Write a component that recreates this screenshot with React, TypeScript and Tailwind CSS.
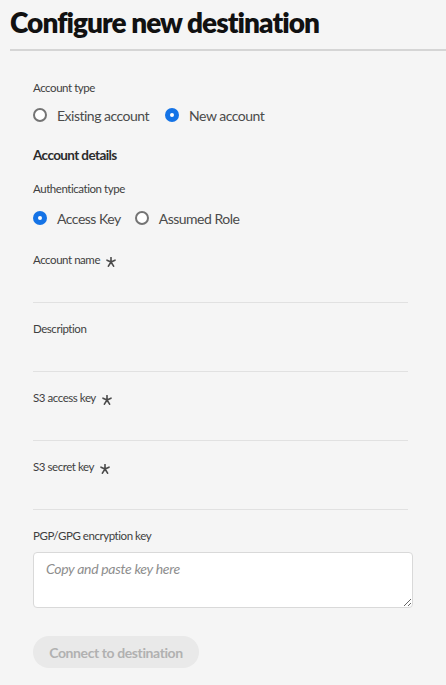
import React from "react";

const font = { fontFamily: 'Lato, "Open Sans", sans-serif' };

function Radio({ label, checked }: { label: string; checked?: boolean }) {
  return (
    <label className="flex items-center gap-[10px]">
      {checked ? (
        <span className="w-[14px] h-[14px] rounded-full bg-[#1473e6] flex items-center justify-center">
          <span className="w-[4px] h-[4px] rounded-full bg-white" />
        </span>
      ) : (
        <span className="w-[14px] h-[14px] rounded-full border-2 border-[#747474] bg-white" />
      )}
      <span className="text-[14px] text-[#4b4b4b] tracking-[-0.5px]">{label}</span>
    </label>
  );
}

function Star() {
  return (
    <svg width="10" height="10" viewBox="0 0 10 10" className="ml-[6px] mt-[4px]">
      <path d="M5 0.5 V5 M5 5 L1 3.2 M5 5 L9 3.2 M5 5 L2.4 9.2 M5 5 L7.6 9.2" stroke="#4b4b4b" strokeWidth="1.6" strokeLinecap="round" />
    </svg>
  );
}

const labelCls = "text-[11.5px] text-[#3f3f3f] tracking-[-0.45px] leading-[16px]";

function Field({ label, required }: { label: string; required?: boolean }) {
  return (
    <div className="flex flex-col">
      <div className={`flex items-center h-[16px] ${labelCls}`}>
        {label}
        {required && <Star />}
      </div>
      <input className="h-[31px] mt-[4px] w-[375px] border-b border-[#e1e1e1] bg-transparent outline-none" />
    </div>
  );
}

export default function App() {
  return (
    <div className="min-h-[685px] w-[446px] bg-[#f5f5f5] overflow-hidden" style={font}>
      <div className="pl-[10px] pt-[4px]">
        <h1 className="text-[28px] font-extrabold text-[#111] leading-[36px] tracking-[-0.95px]">Configure new destination</h1>
        <div className="h-[2px] bg-[#d5d5d5] mt-[9px]" />
      </div>
      <div className="pl-[33px] pt-[29px] flex flex-col">
        <div className={labelCls}>Account type</div>
        <div className="flex gap-[16px] mt-[9px] h-[20px] items-center">
          <Radio label="Existing account" />
          <Radio label="New account" checked />
        </div>
        <div className="text-[13.5px] font-bold text-[#2c2c2c] mt-[20px] leading-[20px] tracking-[-0.6px]">Account details</div>
        <div className={`${labelCls} mt-[16px]`}>Authentication type</div>
        <div className="flex gap-[14px] mt-[11px] h-[20px] items-center">
          <Radio label="Access Key" checked />
          <Radio label="Assumed Role" />
        </div>
        <div className="flex flex-col gap-[18px] mt-[24px]">
          <Field label="Account name" required />
          <Field label="Description" />
          <Field label="S3 access key" required />
          <Field label="S3 secret key" required />
        </div>
        <div className={`${labelCls} mt-[18px]`}>PGP/GPG encryption key</div>
        <textarea
          placeholder="Copy and paste key here"
          className="mt-[8px] w-[380px] h-[56px] bg-white border border-[#d9d9d9] rounded-[4px] px-[12px] py-[5px] text-[14px] italic placeholder:text-[#8e8e8e] outline-none tracking-[-0.3px]"
        />
        <button className="mt-[28px] w-[166px] h-[32px] rounded-full bg-[#e9e9e9] text-[#b1b1b1] text-[14px] font-bold tracking-[-0.4px]">
          Connect to destination
        </button>
      </div>
    </div>
  );
}
